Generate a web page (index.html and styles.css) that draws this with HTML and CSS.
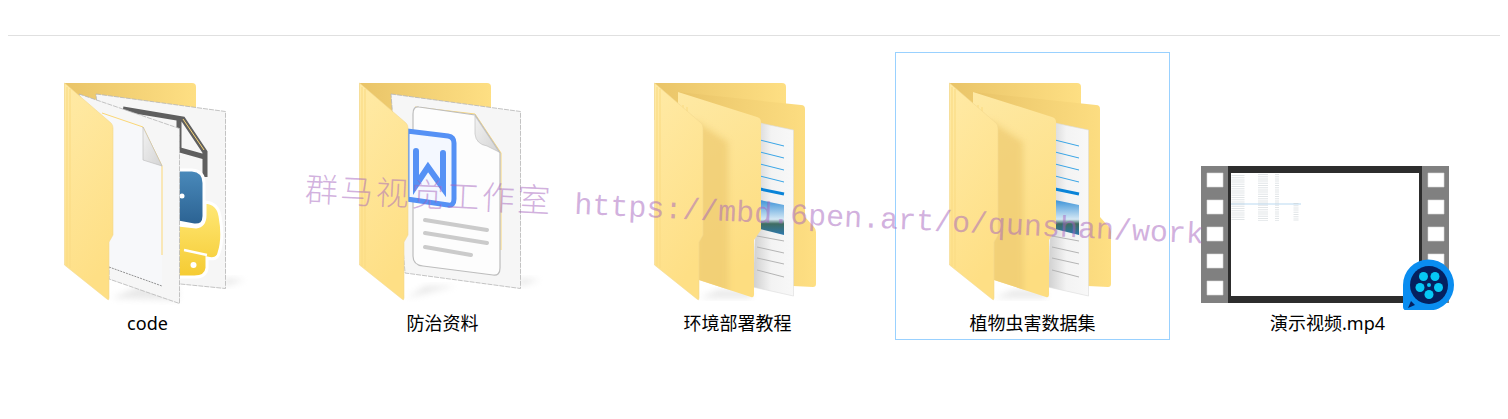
FILE: index.html
```html
<!DOCTYPE html>
<html lang="zh-CN">
<head>
  <meta charset="UTF-8">
  <meta name="viewport" content="width=device-width, initial-scale=1.0">
  <title>文件夹</title>
  <link rel="stylesheet" href="styles.css">
</head>
<body>

  <svg class="defs" width="0" height="0" aria-hidden="true">
    <defs>
      <linearGradient id="gBack" x1="0" x2="1" y1="0" y2="0">
        <stop offset="0" stop-color="#e9c468"/>
        <stop offset="1" stop-color="#fedf83"/>
      </linearGradient>
      <linearGradient id="gFlap" x1="0" x2="0.3" y1="0" y2="1">
        <stop offset="0" stop-color="#ffeaa6"/>
        <stop offset="1" stop-color="#fedf85"/>
      </linearGradient>
      <linearGradient id="gMid" x1="0" x2="0.3" y1="0" y2="1">
        <stop offset="0" stop-color="#fee9a4"/>
        <stop offset="1" stop-color="#fddd80"/>
      </linearGradient>
      <linearGradient id="gPaper" x1="0" x2="1" y1="0" y2="0">
        <stop offset="0" stop-color="#cfcfcf"/>
        <stop offset="0.45" stop-color="#f3f3f3"/>
        <stop offset="1" stop-color="#f8f8f8"/>
      </linearGradient>
      <linearGradient id="gFold" x1="0" x2="1" y1="0" y2="1">
        <stop offset="0" stop-color="#f2f2f2"/>
        <stop offset="1" stop-color="#d4d4d4"/>
      </linearGradient>
      <linearGradient id="gBlue" x1="0" x2="0" y1="0" y2="1">
        <stop offset="0" stop-color="#4a8abb"/>
        <stop offset="1" stop-color="#2b6292"/>
      </linearGradient>
      <linearGradient id="gYellow" x1="0" x2="0" y1="0" y2="1">
        <stop offset="0" stop-color="#ffe877"/>
        <stop offset="1" stop-color="#f5cb32"/>
      </linearGradient>
      <linearGradient id="gSky" x1="0" x2="0" y1="0" y2="1">
        <stop offset="0" stop-color="#3e94d8"/>
        <stop offset="0.55" stop-color="#d5e8f5"/>
        <stop offset="0.68" stop-color="#3f6d62"/>
        <stop offset="1" stop-color="#2d78ad"/>
      </linearGradient>
      <filter id="soft" x="-30%" y="-30%" width="160%" height="160%">
        <feGaussianBlur stdDeviation="3"/>
      </filter>
      <clipPath id="midClip">
        <path d="M68 32 L147 57 Q151 58 151 62 V170 L144 180 V234 Q144 238 141 237 L89 220 V100 L68 84Z"/>
      </clipPath>

      <!-- parts shared by the folders -->
      <symbol id="folderBack" viewBox="0 0 256 250">
        <path class="back" d="M44.500 23H172a4 4 0 0 1 4 4V60H44.500Z"/>
      </symbol>
      <symbol id="folderFlap" viewBox="0 0 256 250">
        <path class="flap" d="M44.500 23 L91 63 Q93 65 93 68 V175 L89 182 V238 Q89 241 87 239 L44.500 205Z"/>
        <path class="flap-line" d="M47 27V206M50 29V208"/>
      </symbol>
      <symbol id="folderFull" viewBox="0 0 256 250">
        <path class="shadow" d="M90 238 L108 230 H140 L142 238Z"/>
        <use href="#folderBack"/>
        <path class="back" d="M68 32 L191 45 a4 4 0 0 1 4 4 V157 L204 167 Q206 169 206 172 V224 Q206 227 203 227 L183 226 V100 H68Z"/>
        <path class="paper" d="M150 63 L183.500 70 V236 L143 227Z"/>
        <path class="note-blue" d="M150 80 L174 86M150 92 L174 98M150 104 L174 110M150 116 L174 122"/>
        <path class="note-bar" d="M150 129 L174 134"/>
        <path class="sky" d="M150 140 L174 145 V175 L150 169Z"/>
        <path class="note-gray" d="M147 176 L174 181M147 187 L174 193M147 198 L174 204M147 210 L174 217"/>
        <path class="mid" d="M68 32 L147 57 Q151 58 151 62 V170 L144 180 V234 Q144 238 141 237 L89 220 V100 L68 84Z"/>
        <g clip-path="url(#midClip)">
          <path class="mid-shade" d="M85 60 L118 82 V240 L85 225Z"/>
        </g>
        <path class="flap-line" d="M73 45V72M77 47V75"/>
        <use href="#folderFlap"/>
      </symbol>
    </defs>
  </svg>

  <hr class="divider">

  <div class="grid">

    <div class="tile">
      <svg class="icon" viewBox="0 0 256 250">
        <path class="shadow" d="M92 238 L120 226 H158 V240Z"/>
        <path class="shadow" d="M205 226 L205 218 L225 220Z"/>
        <use href="#folderBack"/>
        <path class="sheet" d="M76 34 L205.500 51.500 V228.500 L90 217Z"/>
        <path class="doc-line" d="M103 49 L163 59 L185 92 V117M160 90 L185 97M159 60 V90"/>
        <path class="doc-edge" d="M163 59 L184 90"/>
        <path class="py-blue" d="M158 110 H172 Q184 111 184 123 V156 Q184 166 174 165 L158 162Z"/>
        <circle class="py-eye" cx="162" cy="136" r="2.500"/>
        <path class="py-yellow" d="M185 142 Q198 143 200 156 Q204 178 199 193 Q197 201 187 198 V208 Q186 218 172 217 H158 V165 L176 167 Q185 166 185 155Z"/>
        <path class="py-band" d="M164 190 L187 195"/>
        <circle class="py-eye" cx="173.500" cy="205" r="3"/>
        <path class="sheet" d="M59 34 L159.500 68.500 V243.500 L89 219 V100Z"/>
        <path class="inner" d="M82 53 L123 67 L142 106 V226 L89 207 V100Z"/>
        <path class="doc-edge" d="M82 53 L123 67 L142 106 V195"/>
        <path class="inner-dash" d="M89 207 L142 226"/>
        <path class="fold" d="M123 67 V100 L142 106Z"/>
        <use href="#folderFlap"/>
      </svg>
      <div class="label">code</div>
    </div>

    <div class="tile">
      <svg class="icon" viewBox="0 0 256 250">
        <path class="shadow" d="M92 238 L110 226 H140 Z"/>
        <path class="shadow" d="M205 226 L205 218 L225 220Z"/>
        <use href="#folderBack"/>
        <path class="sheet" d="M76 34 L205.500 51.500 V228.500 L90 213Z"/>
        <path class="doc-edge" d="M100 47 L160 54 L186 93 V190"/>
        <path class="word-doc" d="M104 47 L160 55 L185 93 V208 Q185 216 178 215 L108 206 Q98 205 98 196 V54 Q98 46 104 47Z"/>
        <path class="fold" d="M160 56 V74 Q161 84 172 86 L184 92Z"/>
        <path class="word-box" d="M92 71 L133 76 Q139 77 139 83 V139 Q139 146 133 145 L92 139Z"/>
        <path class="word-w" d="M101 91 V125 L113 107 L128 128 V93"/>
        <path class="word-lines" d="M110 160 L172 170M110 173 L172 183M110 187 L156 195"/>
        <use href="#folderFlap"/>
      </svg>
      <div class="label">防治资料</div>
    </div>

    <div class="tile">
      <svg class="icon" viewBox="0 0 256 250"><use href="#folderFull"/></svg>
      <div class="label">环境部署教程</div>
    </div>

    <div class="tile selected">
      <svg class="icon" viewBox="0 0 256 250"><use href="#folderFull"/></svg>
      <div class="label">植物虫害数据集</div>
    </div>

    <div class="tile">
      <svg class="icon" viewBox="0 0 256 250">
        <rect class="film-side" x="1" y="106" width="248" height="137"/>
        <rect class="film-frame" x="28" y="106" width="194" height="137"/>
        <rect class="film-screen" x="31" y="113" width="188" height="123"/>
        <path class="film-holes" d="M7 113h16v14h-16zM7 140h16v14h-16zM7 167h16v14h-16zM7 194h16v14h-16zM7 221h16v14h-16zM228 113h16v14h-16zM228 140h16v14h-16zM228 167h16v14h-16zM228 194h16v14h-16zM228 221h16v14h-16z"/>
        <rect class="shot-row" x="31" y="143" width="70" height="2"/>
        <path class="shot-col" d="M38 115V161" stroke-width="13"/>
        <path class="shot-col" d="M63 114V161" stroke-width="10"/>
        <path class="shot-col" d="M77 114V161" stroke-width="4"/>
        <path class="shot-col" d="M96 143V161" stroke-width="5"/>
        <path class="badge" d="M203 225 a25.500 25.500 0 1 1 26 25.500 H206 Q203 250 203 247Z"/>
        <circle class="badge-in" cx="229" cy="225" r="19"/>
        <path class="badge-in" d="M208 248 L211 241 L215 245Z"/>
        <circle class="badge-dot" cx="223.500" cy="216.500" r="4.500"/>
        <circle class="badge-dot" cx="235" cy="216.500" r="4.500"/>
        <circle class="badge-dot" cx="220" cy="227.500" r="4.500"/>
        <circle class="badge-dot" cx="238.500" cy="227.500" r="4.500"/>
        <circle class="badge-dot" cx="229" cy="234.500" r="4.500"/>
        <circle class="badge-dot" cx="229" cy="225" r="2"/>
      </svg>
      <div class="label">演示视频.mp4</div>
    </div>

  </div>

  <div class="watermark"><span class="wm-cjk">群马视觉工作室</span> https://mbd.6pen.art/o/qunshan/work</div>

</body>
</html>
```

FILE: styles.css
```css
body {
  margin: 0;
  padding: 35px 8px 0;
  background: #fff;
  color: #000;
  font-family: "Noto Sans", "Noto Sans CJK SC", sans-serif;
  overflow: hidden;
}
.defs {
  position: absolute;
}
.divider {
  margin: 0 0 16px;
  border: none;
  border-top: 1px solid #e0e0e0;
}
.grid {
  display: flex;
  gap: 20px;
  padding-left: 2px;
}
.tile {
  box-sizing: border-box;
  width: 275px;
  height: 288px;
  border: 1px solid transparent;
  display: flex;
  flex-direction: column;
  align-items: center;
  padding-top: 7px;
}
.selected {
  border-color: #99d1ff;
}
.icon {
  width: 256px;
  height: 250px;
  flex: none;
}
.label {
  font-size: 18px;
  line-height: 26px;
  white-space: nowrap;
}
.watermark {
  position: absolute;
  left: 305px;
  top: 165px;
  transform: rotate(2.7deg);
  transform-origin: 0 50%;
  font-family: "Liberation Mono", "Noto Sans CJK SC", monospace;
  font-size: 30px;
  line-height: 44px;
  color: rgba(165, 100, 190, 0.5);
  white-space: nowrap;
}
.wm-cjk {
  font-family: "Noto Sans CJK SC", sans-serif;
  font-weight: 300;
  font-size: 33px;
  letter-spacing: 2.400px;
  margin-right: 4px;
}

/* folders */
.back { fill: url(#gBack); }
.flap { fill: url(#gFlap); stroke: #f3d88e; stroke-width: 0.6; }
.flap-line { fill: none; stroke: #fbdc85; stroke-width: 1.200; }
.mid { fill: url(#gMid); }
.mid-shade { fill: #eecb72; opacity: 0.75; filter: url(#soft); }
.shadow { fill: #c8c8c8; opacity: 0.4; filter: url(#soft); }
.paper { fill: url(#gPaper); stroke: #dcdcdc; stroke-width: 0.6; }
.note-blue { fill: none; stroke: #3aa5e6; stroke-width: 1; }
.note-bar { fill: none; stroke: #0a84d8; stroke-width: 3; }
.note-gray { fill: none; stroke: #b4b4b4; stroke-width: 1; }
.sky { fill: url(#gSky); }

/* code folder */
.sheet { fill: #f6f6f6; stroke: #b5b5b5; stroke-width: 0.8; stroke-dasharray: 5 1; }
.doc-line { fill: none; stroke: #5f5f5f; stroke-width: 5; }
.doc-edge { fill: none; stroke: #fbd776; stroke-width: 1; }
.py-blue { fill: url(#gBlue); stroke: #fff; stroke-width: 3; }
.py-yellow { fill: url(#gYellow); stroke: #fff; stroke-width: 3; }
.py-eye { fill: #fff; }
.py-band { fill: none; stroke: #fff; stroke-width: 2.500; }
.inner { fill: #f7f8fa; }
.inner-dash { fill: none; stroke: #777; stroke-width: 0.8; stroke-dasharray: 2 1; }
.fold { fill: url(#gFold); stroke: #bbb; stroke-width: 0.6; }

/* word file */
.word-doc { fill: #fdfdfd; stroke: #bdbdbd; stroke-width: 1.200; }
.word-box { fill: #f4f8ff; stroke: #5591f5; stroke-width: 5; }
.word-w { fill: none; stroke: #5591f5; stroke-width: 6; stroke-linecap: round; stroke-linejoin: miter; }
.word-lines { fill: none; stroke: #cbcbcb; stroke-width: 4; stroke-linecap: round; }

/* video thumbnail */
.film-side { fill: #808080; }
.film-frame { fill: #2d2d2d; }
.film-screen { fill: #fff; }
.film-holes { fill: #fff; stroke: #d8d8d8; stroke-width: 0.6; }
.shot-row { fill: #dcecf8; }
.shot-col { fill: none; stroke: #c4cbcf; stroke-dasharray: 1 1.200; opacity: 0.5; }
.badge { fill: #0a8df0; }
.badge-in { fill: #05205f; }
.badge-dot { fill: #06c8f5; }
```
